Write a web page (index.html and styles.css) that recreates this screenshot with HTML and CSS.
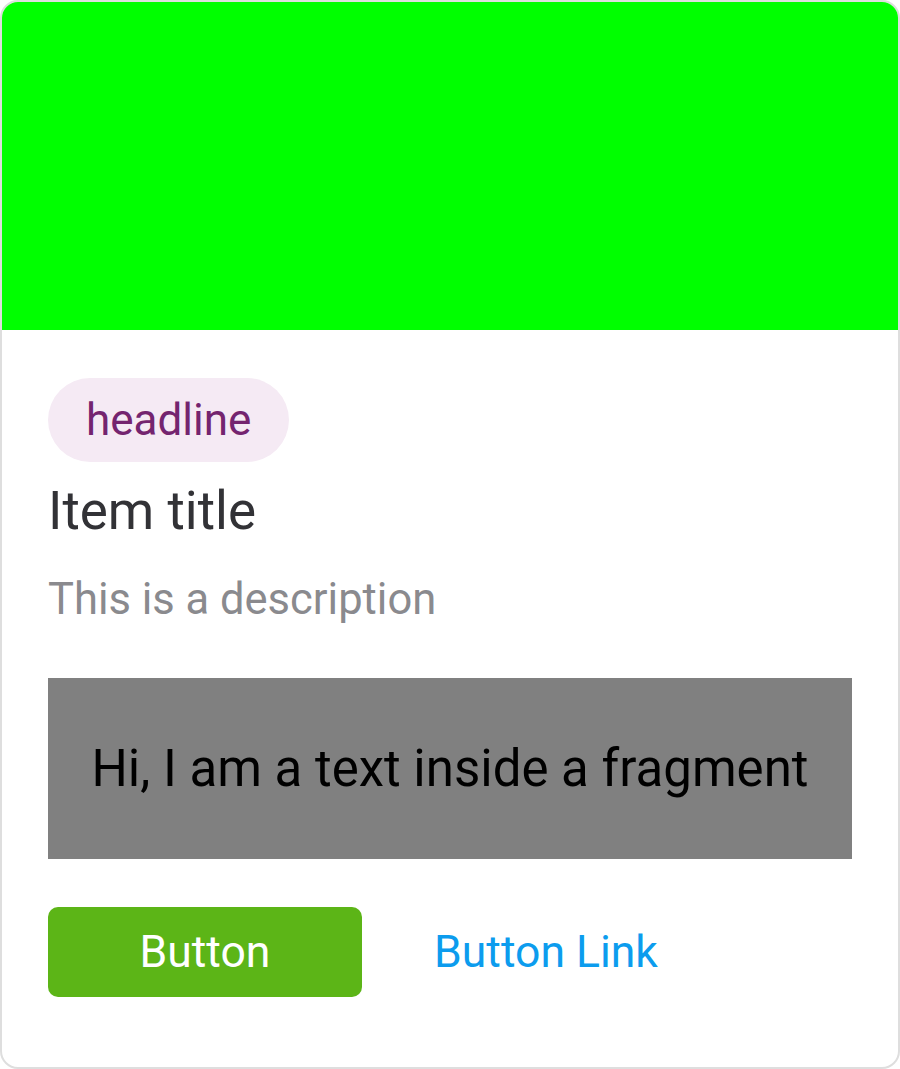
FILE: index.html
```html
<!DOCTYPE html>
<html lang="en">
<head>
<meta charset="utf-8">
<title>Card</title>
<link rel="stylesheet" href="styles.css">
</head>
<body>
<div class="card">
  <div class="card-media"></div>
  <div class="card-body">
    <span class="chip">headline</span>
    <h2 class="title">Item title</h2>
    <p class="description">This is a description</p>
    <div class="fragment">Hi, I am a text inside a fragment</div>
    <div class="actions">
      <button class="btn btn-primary">Button</button>
      <button class="btn btn-link">Button Link</button>
    </div>
  </div>
</div>
</body>
</html>
```
FILE: styles.css
```css
html, body {
  margin: 0;
  padding: 0;
  background: #ffffff;
}
body {
  font-family: Roboto, "Liberation Sans", Arial, sans-serif;
}
.card {
  box-sizing: border-box;
  width: 900px;
  height: 1069px;
  border: 2px solid #dedede;
  border-radius: 18px;
  overflow: hidden;
  background: #ffffff;
  display: flex;
  flex-direction: column;
}
.card-media {
  height: 328px;
  background: #00ff00;
  flex: none;
}
.card-body {
  padding: 48px 46px 0 46px;
  display: flex;
  flex-direction: column;
  align-items: flex-start;
}
.chip {
  display: inline-flex;
  align-items: center;
  box-sizing: border-box;
  height: 84px;
  padding: 0 38px;
  border-radius: 42px;
  background: #f5eaf4;
  color: #74246f;
  font-size: 44px;
}
.title {
  margin: 18px 0 0 0;
  font-size: 53px;
  font-weight: 400;
  line-height: 63px;
  color: #323236;
}
.description {
  margin: 31px 0 0 0;
  font-size: 43.5px;
  line-height: 52px;
  color: #8a8a8e;
}
.fragment {
  align-self: stretch;
  margin-top: 52px;
  height: 181px;
  background: #808080;
  color: #000000;
  font-size: 51px;
  display: flex;
  align-items: center;
  justify-content: center;
}
.actions {
  margin-top: 48px;
  display: flex;
  gap: 27px;
}
.btn {
  width: 314px;
  height: 90px;
  border: none;
  border-radius: 10px;
  font-family: Roboto, "Liberation Sans", Arial, sans-serif;
  font-size: 44.5px;
  padding: 0;
  cursor: pointer;
}
.btn-primary {
  background: #5cb517;
  color: #ffffff;
}
.btn-link {
  background: transparent;
  color: #0c9cee;
}
```
